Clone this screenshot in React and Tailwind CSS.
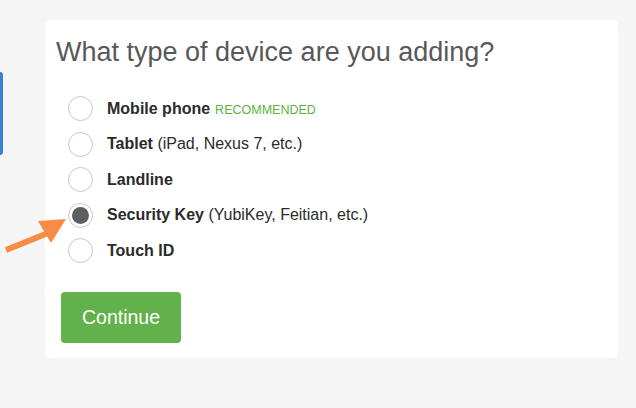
import React from "react";

const options = [
  { label: "Mobile phone", note: "RECOMMENDED" },
  { label: "Tablet", extra: "(iPad, Nexus 7, etc.)" },
  { label: "Landline" },
  { label: "Security Key", extra: "(YubiKey, Feitian, etc.)", checked: true },
  { label: "Touch ID" },
];

function Radio({ checked }) {
  return (
    <span className="flex h-[25px] w-[25px] shrink-0 items-center justify-center rounded-full border border-[#c8c8c8] bg-white">
      {checked && <span className="h-[17px] w-[17px] rounded-full bg-[#5f5f5f]" />}
    </span>
  );
}

export default function App() {
  return (
    <div
      className="relative h-[408px] w-[636px] overflow-hidden bg-[#f5f5f5]"
      style={{ fontFamily: '"Liberation Sans", Arial, sans-serif' }}
    >
      <div className="absolute left-0 top-[72px] h-[83px] w-[3px] rounded-r-sm bg-[#3a7fd5]" />

      <div className="ml-[45px] mt-[20px] h-[338px] w-[573px] rounded-[5px] bg-white pl-[11px] pt-[16px]">
        <h1 className="text-[27px] leading-[32px] text-[#585858]">
          What type of device are you adding?
        </h1>

        <div className="mt-[28px] flex flex-col gap-[10.5px] pl-[12px]">
          {options.map((o) => (
            <label key={o.label} className="flex h-[25px] items-center gap-[14px]">
              <Radio checked={o.checked} />
              <span className="text-[16px] text-[#2b2b2b]">
                <span className="font-bold">{o.label}</span>
                {o.extra && <span> {o.extra}</span>}
                {o.note && (
                  <span className="ml-[5px] text-[12.5px] text-[#5cb33f]">{o.note}</span>
                )}
              </span>
            </label>
          ))}
        </div>

        <button
          type="button"
          className="ml-[5px] mt-[29px] h-[51px] w-[120px] rounded-[4px] bg-[#62b14a] text-[19.5px] text-white"
        >
          Continue
        </button>
      </div>

      <svg
        className="absolute left-0 top-0"
        width="636"
        height="408"
        viewBox="0 0 636 408"
      >
        <line x1="6" y1="250" x2="48" y2="233" stroke="#f78c45" strokeWidth="6" />
        <polygon points="66,219 38,221 51,243" fill="#f78c45" />
      </svg>
    </div>
  );
}
